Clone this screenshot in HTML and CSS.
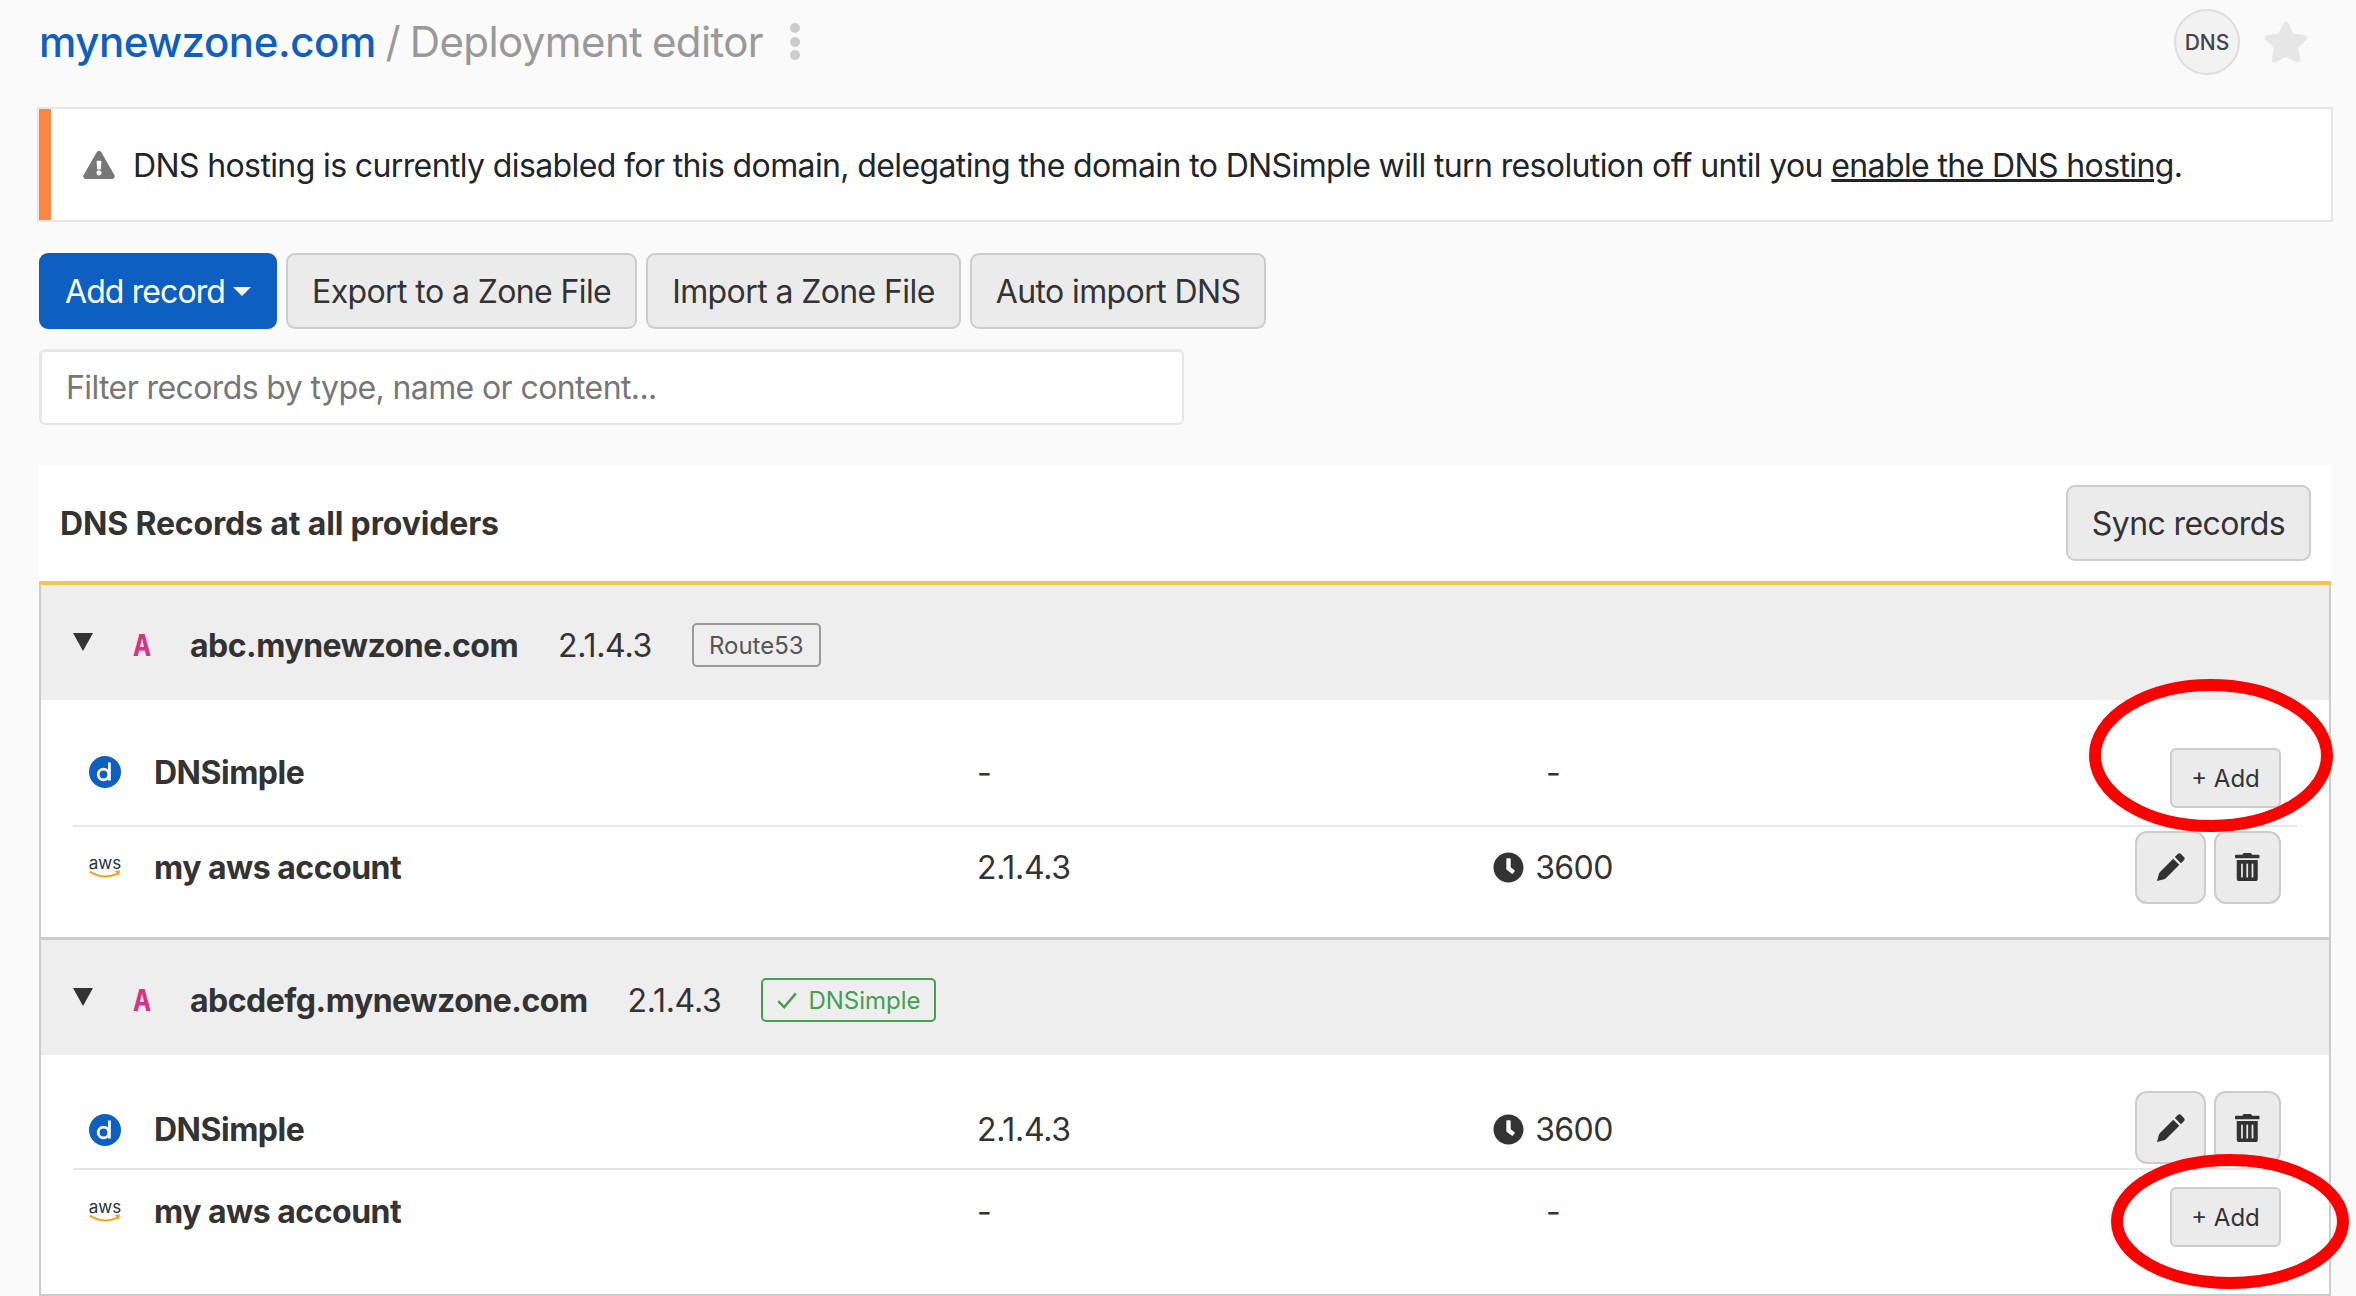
FILE: index.html
```html
<!DOCTYPE html>
<html lang="en">
<head>
    <meta charset="UTF-8">
    <title>Deployment editor</title>
    <link rel="stylesheet" href="styles.css">
</head>
<body>

<div class="header">
    <h1 class="title"><a href="#">mynewzone.com</a> <span class="slash">/</span> <span class="sub">Deployment editor</span></h1>
    <div class="kebab"><i></i><i></i><i></i></div>
    <div class="dns-badge">DNS</div>
    <svg class="star" viewBox="0 0 576 512"><path d="M259.3 17.8L194 150.2 47.9 171.5c-26.2 3.8-36.7 36.1-17.7 54.6l105.7 103-25 145.5c-4.5 26.3 23.2 46 46.4 33.7L288 439.6l130.7 68.7c23.2 12.2 50.9-7.4 46.4-33.7l-25-145.5 105.7-103c19-18.5 8.5-50.8-17.7-54.6L382 150.2 316.7 17.8c-11.7-23.6-45.6-23.9-57.4 0z"/></svg>
</div>

<div class="alert">
    <svg class="alert-icon" viewBox="0 0 576 512"><path d="M569.517 440.013C587.975 472.007 564.806 512 527.94 512H48.054c-36.937 0-59.999-40.055-41.577-71.987L246.423 24c18.467-32.009 64.72-31.951 83.154 0l239.94 416.013zM288 354c-25.405 0-46 20.595-46 46s20.595 46 46 46 46-20.595 46-46-20.595-46-46-46zm-43.673-165.346l7.418 136c.347 6.364 5.609 11.346 11.982 11.346h48.546c6.373 0 11.635-4.982 11.982-11.346l7.418-136c.375-6.874-5.098-12.654-11.982-12.654h-63.383c-6.884 0-12.356 5.78-11.981 12.654z"/></svg>
    <p>DNS hosting is currently disabled for this domain, delegating the domain to DNSimple will turn resolution off until you <a href="#">enable the DNS hosting</a>.</p>
</div>

<div class="toolbar">
    <button class="btn btn-primary">Add record<span class="caret"></span></button>
    <button class="btn">Export to a Zone File</button>
    <button class="btn">Import a Zone File</button>
    <button class="btn">Auto import DNS</button>
</div>

<input class="filter" type="text" placeholder="Filter records by type, name or content...">

<div class="card">
    <div class="card-header">
        <h3>DNS Records at all providers</h3>
        <button class="btn">Sync records</button>
    </div>

    <div class="group">
        <div class="group-header">
            <span class="toggle"></span>
            <span class="rtype">A</span>
            <span class="rname">abc.mynewzone.com</span>
            <span class="rvalue">2.1.4.3</span>
            <span class="tag">Route53</span>
        </div>
        <div class="rec rec-first-add">
            <svg class="logo" viewBox="0 0 32 32"><circle cx="16" cy="16" r="16" fill="#0d5fc2"/><circle cx="14.500" cy="18.500" r="5.300" fill="none" stroke="#fff" stroke-width="2.8"/><path d="M20.400 6.500v18" stroke="#fff" stroke-width="2.8" fill="none"/></svg>
            <span class="name">DNSimple</span>
            <span class="val">-</span>
            <span class="ttl">-</span>
            <div class="actions"><button class="btn-add">+ Add</button></div>
        </div>
        <div class="rec rec-last-edit">
            <div class="logo aws"><span>aws</span><svg viewBox="0 0 32 9"><path d="M1 1.5c8 6 20 6.500 28 1.500" fill="none" stroke="#f90" stroke-width="2"/><path d="M26 1l5-.5-1 5z" fill="#f90"/></svg></div>
            <span class="name">my aws account</span>
            <span class="val">2.1.4.3</span>
            <span class="ttl"><svg class="clock" viewBox="0 0 512 512"><path d="M256 8C119 8 8 119 8 256s111 248 248 248 248-111 248-248S393 8 256 8zm57.1 350.1L224.9 294c-3.1-2.3-4.9-5.9-4.9-9.7V116c0-6.6 5.4-12 12-12h48c6.6 0 12 5.4 12 12v137.700l63.500 46.200c5.400 3.900 6.500 11.400 2.600 16.800L329 355.500c-3.900 5.300-11.400 6.500-16.900 2.600z"/></svg>3600</span>
            <div class="actions">
                <button class="btn-icon btn-edit"><svg viewBox="0 0 24 24"><path d="M13.900 4.900l5.200 5.200L7.800 21.400c-.5.500-1.100.8-1.700 1L0 24l1.600-6.100c.2-.6.500-1.200 1-1.700zM15.300 3.500L17.800.9c.8-.8 2-.8 2.800 0l2.500 2.500c.8.800.8 2 0 2.800l-2.600 2.500z"/></svg></button>
                <button class="btn-icon btn-trash"><svg viewBox="0 0 448 512"><path d="M32 464a48 48 0 0 0 48 48h288a48 48 0 0 0 48-48V128H32zm272-256a16 16 0 0 1 32 0v224a16 16 0 0 1-32 0zm-96 0a16 16 0 0 1 32 0v224a16 16 0 0 1-32 0zm-96 0a16 16 0 0 1 32 0v224a16 16 0 0 1-32 0zM432 32H312l-9.400-18.700A24 24 0 0 0 281.100 0H166.800a23.720 23.720 0 0 0-21.400 13.300L136 32H16A16 16 0 0 0 0 48v32a16 16 0 0 0 16 16h416a16 16 0 0 0 16-16V48a16 16 0 0 0-16-16z"/></svg></button>
            </div>
        </div>
    </div>

    <div class="group">
        <div class="group-header">
            <span class="toggle"></span>
            <span class="rtype">A</span>
            <span class="rname">abcdefg.mynewzone.com</span>
            <span class="rvalue">2.1.4.3</span>
            <span class="tag tag-ok"><svg class="check" viewBox="0 0 20 20"><path d="M2 11l5.500 5.500L18 4" fill="none" stroke="#43a04d" stroke-width="2.200"/></svg>DNSimple</span>
        </div>
        <div class="rec rec-first-edit">
            <svg class="logo" viewBox="0 0 32 32"><circle cx="16" cy="16" r="16" fill="#0d5fc2"/><circle cx="14.500" cy="18.500" r="5.300" fill="none" stroke="#fff" stroke-width="2.8"/><path d="M20.400 6.500v18" stroke="#fff" stroke-width="2.8" fill="none"/></svg>
            <span class="name">DNSimple</span>
            <span class="val">2.1.4.3</span>
            <span class="ttl"><svg class="clock" viewBox="0 0 512 512"><path d="M256 8C119 8 8 119 8 256s111 248 248 248 248-111 248-248S393 8 256 8zm57.1 350.1L224.9 294c-3.1-2.3-4.9-5.9-4.9-9.7V116c0-6.6 5.4-12 12-12h48c6.6 0 12 5.4 12 12v137.700l63.500 46.200c5.400 3.900 6.500 11.400 2.600 16.800L329 355.500c-3.900 5.300-11.400 6.500-16.900 2.600z"/></svg>3600</span>
            <div class="actions">
                <button class="btn-icon btn-edit"><svg viewBox="0 0 24 24"><path d="M13.900 4.900l5.200 5.200L7.800 21.400c-.5.500-1.100.8-1.700 1L0 24l1.600-6.100c.2-.6.500-1.200 1-1.700zM15.300 3.500L17.800.9c.8-.8 2-.8 2.800 0l2.500 2.500c.8.800.8 2 0 2.800l-2.600 2.500z"/></svg></button>
                <button class="btn-icon btn-trash"><svg viewBox="0 0 448 512"><path d="M32 464a48 48 0 0 0 48 48h288a48 48 0 0 0 48-48V128H32zm272-256a16 16 0 0 1 32 0v224a16 16 0 0 1-32 0zm-96 0a16 16 0 0 1 32 0v224a16 16 0 0 1-32 0zm-96 0a16 16 0 0 1 32 0v224a16 16 0 0 1-32 0zM432 32H312l-9.400-18.700A24 24 0 0 0 281.100 0H166.800a23.720 23.720 0 0 0-21.400 13.300L136 32H16A16 16 0 0 0 0 48v32a16 16 0 0 0 16 16h416a16 16 0 0 0 16-16V48a16 16 0 0 0-16-16z"/></svg></button>
            </div>
        </div>
        <div class="rec rec-last-add">
            <div class="logo aws"><span>aws</span><svg viewBox="0 0 32 9"><path d="M1 1.5c8 6 20 6.500 28 1.500" fill="none" stroke="#f90" stroke-width="2"/><path d="M26 1l5-.5-1 5z" fill="#f90"/></svg></div>
            <span class="name">my aws account</span>
            <span class="val">-</span>
            <span class="ttl">-</span>
            <div class="actions"><button class="btn-add">+ Add</button></div>
        </div>
    </div>
</div>

<!-- red circles drawn on top of the screenshot -->
<svg class="marks" viewBox="0 0 2356 1296">
    <ellipse cx="2211" cy="755.500" rx="116" ry="70.500"/>
    <ellipse cx="2230" cy="1221.500" rx="113" ry="61.500"/>
</svg>

</body>
</html>
```

FILE: styles.css
```css
* {
    box-sizing: border-box;
}

html, body {
    height: 100%;
}

body {
    font-family: Inter, "Liberation Sans", sans-serif;
    font-size: 32px;
    letter-spacing: -0.6px;
    color: #212529;
    background-color: #fafafa;
    margin: 0;
    padding: 0 25px 0 39px;
    overflow: hidden;
    position: relative;
}

.header {
    height: 109px;
    display: flex;
    align-items: center;
    padding-bottom: 26px;
}

.title {
    margin: 0;
    font-size: 42px;
    font-weight: 400;
    letter-spacing: -0.6px;
    word-spacing: -1.5px;
}

.title a {
    color: #0d5fc2;
    font-weight: 500;
    letter-spacing: -0.45px;
    text-decoration: none;
}

.slash, .sub {
    color: #999;
}

.kebab {
    margin-left: 27px;
    display: flex;
    flex-direction: column;
    gap: 3.500px;
}

.kebab i {
    display: block;
    width: 10px;
    height: 10px;
    border-radius: 50%;
    background-color: #ccc;
}

.dns-badge {
    margin-left: auto;
    width: 66px;
    height: 66px;
    padding-top: 2px;
    border: 2px solid #ddd;
    border-radius: 50%;
    background-color: #f2f2f2;
    color: #444;
    font-size: 21px;
    font-weight: 500;
    letter-spacing: 0;
    display: flex;
    align-items: center;
    justify-content: center;
}

.star {
    width: 46px;
    height: 46px;
    margin: 0 22px 0 23px;
    fill: #e6e6e6;
}

.alert {
    height: 111px;
    display: flex;
    align-items: center;
    padding-left: 32px;
    background-color: #fff;
    border-left: 12px solid #ff8640;
    box-shadow: 0 0 0 2px #e6e6e6;
    margin-bottom: 33px;
}

.alert-icon {
    width: 32px;
    height: 28px;
    fill: #777;
    margin-right: 18px;
    flex-shrink: 0;
}

.alert p {
    margin: 2px 0 0;
    letter-spacing: -0.62px;
}

.alert a {
    color: #212529;
}

.toolbar {
    display: flex;
    gap: 9px;
    margin-bottom: 20px;
}

.btn {
    font-family: inherit;
    font-size: 32px;
    letter-spacing: inherit;
    height: 76px;
    padding: 0 24px;
    color: #333;
    background-color: #ebebeb;
    border: 2px solid #ccc;
    border-radius: 9px;
}

.btn-primary {
    color: #fff;
    letter-spacing: -0.9px;
    background-color: #0d5fc2;
    border-color: #0d5fc2;
    display: flex;
    align-items: center;
}

.caret {
    width: 0;
    height: 0;
    margin-left: 8px;
    border-left: 9px solid transparent;
    border-right: 9px solid transparent;
    border-top: 9px solid #fff;
}

.filter {
    display: block;
    width: 1145px;
    height: 76px;
    padding: 0 24px;
    font-family: inherit;
    font-size: 32px;
    letter-spacing: inherit;
    color: #333;
    background-color: #fff;
    border: 2px solid #e6e6e6;
    border-top-width: 3px;
    border-left-width: 3px;
    border-radius: 6px;
    margin-bottom: 40px;
}

.filter::placeholder {
    color: #777;
    opacity: 1;
}

.card {
    background-color: #fff;
}

.card-header {
    height: 120px;
    display: flex;
    align-items: center;
    justify-content: space-between;
    padding: 0 20px 0 21px;
    border-bottom: 4px solid #f6c350;
}

.card-header h3 {
    margin: 0;
    font-size: 32px;
    font-weight: 700;
    letter-spacing: -0.15px;
    color: #333;
}

.group {
    border-left: 2px solid #ccc;
    border-right: 2px solid #ccc;
    border-bottom: 3px solid #ccc;
}

.group-header {
    height: 115px;
    display: flex;
    align-items: center;
    gap: 40px;
    padding-left: 32px;
    padding-top: 5px;
    background-color: #eee;
}

.toggle {
    width: 0;
    height: 0;
    border-left: 10.500px solid transparent;
    border-right: 10.500px solid transparent;
    border-top: 18px solid #333;
    margin-bottom: 6px;
}

.rtype {
    width: 17px;
    font-family: "DejaVu Sans Mono", monospace;
    font-size: 30px;
    font-weight: 700;
    letter-spacing: 0;
    color: #d63384;
}

.rname, .name {
    font-weight: 700;
    letter-spacing: -0.5px;
    color: #333;
}

.rvalue {
    letter-spacing: -0.3px;
    color: #333;
}

.tag {
    height: 44px;
    display: flex;
    align-items: center;
    padding: 0 15px;
    font-size: 24px;
    letter-spacing: 0;
    color: #555;
    border: 2px solid #999;
    border-radius: 5px;
}

.tag-ok {
    padding: 0 13px;
    color: #43a04d;
    border-color: #43a04d;
}

.check {
    width: 22px;
    height: 22px;
    margin-right: 10px;
}

.rec {
    margin: 0 32px;
    padding-left: 16px;
    display: flex;
    align-items: center;
    border-bottom: 2px solid #e6e6e6;
}

.rec:last-child {
    border-bottom: none;
}

.rec-first-add {
    height: 127px;
    padding-top: 19px;
}

.rec-first-add .actions, .rec-last-add .actions {
    margin-top: 12px;
}

.rec-last-edit {
    height: 110px;
    padding-bottom: 30px;
}

.rec-first-edit {
    height: 115px;
    padding-top: 35px;
    padding-bottom: 3px;
}

.rec-first-edit .logo, .rec-first-edit .name, .rec-first-edit .val, .rec-first-edit .ttl {
    margin-top: 4px;
}

.rec-last-add {
    height: 124px;
    padding-bottom: 42px;
}

.logo {
    width: 32px;
    flex-shrink: 0;
}

.aws {
    display: flex;
    flex-direction: column;
    align-items: center;
    color: #252f3e;
    font-size: 17px;
    letter-spacing: 0;
    line-height: 14px;
}

.aws svg {
    width: 32px;
    height: 9px;
    display: block;
}

.name {
    width: 823px;
    margin-left: 33px;
}

.val {
    width: 456px;
    letter-spacing: -0.3px;
    color: #333;
}

.ttl {
    width: 240px;
    color: #333;
    display: flex;
    align-items: center;
    justify-content: center;
}

.clock {
    width: 31px;
    height: 31px;
    margin-right: 11px;
    fill: #333;
}

.actions {
    margin-left: auto;
    padding-right: 16px;
    display: flex;
    gap: 8px;
}

.btn-add {
    width: 111px;
    height: 60px;
    font-family: inherit;
    font-size: 24px;
    color: #333;
    background-color: #ebebeb;
    border: 2px solid #ccc;
    border-radius: 6px;
    padding: 0;
}

.btn-icon {
    height: 73px;
    padding: 0;
    background-color: #ebebeb;
    border: 2px solid #ccc;
    border-radius: 12px;
    display: flex;
    align-items: center;
    justify-content: center;
}

.btn-edit {
    width: 71px;
}

.btn-trash {
    width: 67px;
}

.btn-icon svg {
    height: 28px;
    fill: #333;
}

.marks {
    position: absolute;
    top: 0;
    left: 0;
    width: 2356px;
    height: 1296px;
    pointer-events: none;
}

.marks ellipse {
    fill: none;
    stroke: #f00;
    stroke-width: 12;
}
```
